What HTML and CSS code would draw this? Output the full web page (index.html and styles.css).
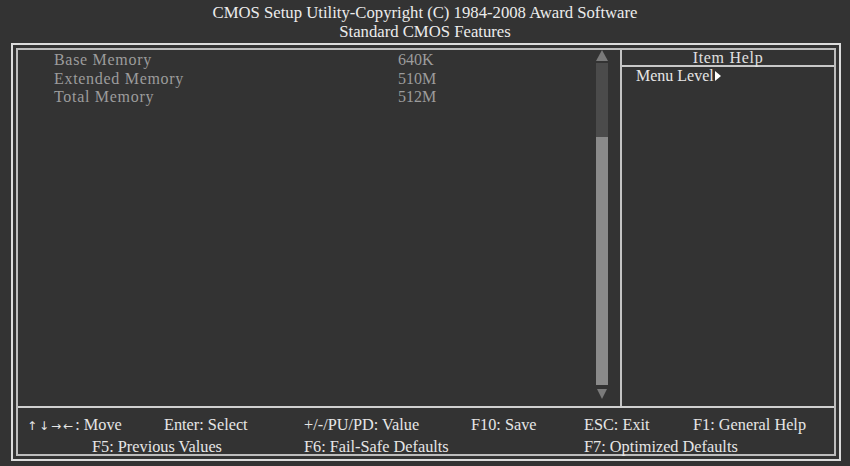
FILE: index.html
```html
<!DOCTYPE html>
<html lang="en">
<head>
    <meta charset="UTF-8">
    <meta name="viewport" content="width=device-width, initial-scale=1.0">
    <title>Standard CMOS Features</title>
    <link rel="stylesheet" href="styles.css">
</head>
<body>
    <div class="title">
        <div>CMOS Setup Utility-Copyright (C) 1984-2008 Award Software</div>
        <div>Standard CMOS Features</div>
    </div>
    <div class="frame">
        <div class="panel">
            <div class="main">
                <div class="items">
                    <ul class="list">
                        <li><span class="label">Base Memory</span><span class="value">640K</span></li>
                        <li><span class="label">Extended Memory</span><span class="value">510M</span></li>
                        <li><span class="label">Total Memory</span><span class="value">512M</span></li>
                    </ul>
                    <div class="scrollbar">
                        <div class="arrow-up"></div>
                        <div class="track">
                            <div class="track-top"></div>
                            <div class="track-rest"></div>
                        </div>
                        <div class="arrow-down"></div>
                    </div>
                </div>
                <div class="help">
                    <div class="help-title">Item Help</div>
                    <div class="help-body">Menu Level<svg class="pointer" width="6" height="10" viewBox="0 0 6 10"><path d="M0 0 L6 5 L0 10 Z" fill="#fff"/></svg></div>
                </div>
            </div>
            <div class="keys">
                <span><span class="arrows">&#8593;&#8595;&#8594;&#8592;</span>: Move</span>
                <span>Enter: Select</span>
                <span>+/-/PU/PD: Value</span>
                <span>F10: Save</span>
                <span>ESC: Exit</span>
                <span>F1: General Help</span>
                <span class="wide first">F5: Previous Values</span>
                <span class="wide">F6: Fail-Safe Defaults</span>
                <span class="wide">F7: Optimized Defaults</span>
            </div>
        </div>
    </div>
</body>
</html>
```

FILE: styles.css
```css
body {
    margin: 0;
    background: #333;
    font-family: "Liberation Serif", "Times New Roman", serif;
    color: #e4e4e4;
}
.title {
    padding-top: 4px;
    font-size: 16.7px;
    line-height: 18.5px;
    text-align: center;
    color: #ececec;
}
.frame {
    width: 820px;
    margin: 2px 0 0 11px;
    padding: 3px;
    border: 2px solid #dcdcdc;
}
.panel {
    border: 2px solid #bdbdbd;
}
.main {
    display: flex;
    height: 356px;
    border-bottom: 2px solid #d0d0d0;
}
.items {
    flex: 1;
    display: flex;
}
.list {
    flex: 1;
    margin: 0;
    padding: 1px 0 0 36px;
    list-style: none;
    font-size: 16px;
    line-height: 18.7px;
    color: #9c9c9c;
}
.list li {
    display: flex;
}
.label {
    width: 344px;
    letter-spacing: 0.7px;
}
.scrollbar {
    width: 12px;
    margin-right: 12px;
    display: flex;
    flex-direction: column;
    align-items: center;
}
.arrow-up {
    width: 0;
    height: 0;
    border-left: 6px solid transparent;
    border-right: 6px solid transparent;
    border-bottom: 11px solid #7a7a7a;
}
.track {
    width: 12px;
    height: 322px;
    margin-top: 2px;
    display: flex;
    flex-direction: column;
}
.track-top {
    height: 74px;
    background: #4b4b4b;
}
.track-rest {
    flex: 1;
    background: #8a8a8a;
}
.arrow-down {
    width: 0;
    height: 0;
    margin-top: 4px;
    border-left: 5.5px solid transparent;
    border-right: 5.5px solid transparent;
    border-top: 10px solid #7a7a7a;
}
.help {
    width: 212px;
    border-left: 2px solid #c4c4c4;
    font-size: 16px;
}
.help-title {
    height: 15px;
    line-height: 15px;
    text-align: center;
    letter-spacing: 0.7px;
    color: #e0e0e0;
    border-bottom: 2px solid #c8c8c8;
}
.help-body {
    padding-left: 14px;
    line-height: 18.7px;
    color: #e6e6e6;
}
.pointer {
    margin-left: 1px;
    vertical-align: 0;
}
.keys {
    height: 39px;
    padding: 7px 0 0 9px;
    display: grid;
    grid-template-columns: 137px 140px 167px 113px 109px auto;
    font-size: 16.3px;
    line-height: 19.5px;
    color: #e6e6e6;
    white-space: nowrap;
}
.arrows {
    font-family: "DejaVu Sans", sans-serif;
    font-size: 12px;
    letter-spacing: 2px;
}
.keys .wide {
    grid-column: span 2;
}
.keys .first {
    padding-left: 65px;
}
```
